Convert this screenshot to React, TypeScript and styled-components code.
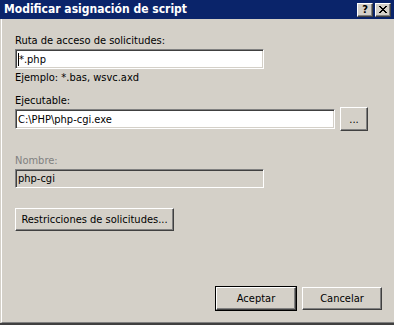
import React from "react";
import styled, { createGlobalStyle, css } from "styled-components";

const Global = createGlobalStyle`
  html, body { margin: 0; padding: 0; background: #D4D0C8; }
  body { font-family: "DejaVu Sans Condensed", "DejaVu Sans", sans-serif; font-stretch: condensed; font-size: 11px; color: #000; }
`;

const Window = styled.div`
  width: 394px;
  height: 325px;
  box-sizing: border-box;
  background: #d4d0c8;
  display: flex;
  flex-direction: column;
  border-bottom: 2px solid #404040;
`;

const TitleBar = styled.div`
  height: 19px;
  flex: none;
  background: #0a246a;
  display: flex;
  align-items: center;
  justify-content: space-between;
  padding: 0 3px 0 4px;
`;

const Title = styled.div`
  color: #fff;
  font-weight: bold;
  font-size: 12px;
  line-height: 19px;
  white-space: nowrap;
`;

const CaptionButtons = styled.div`
  display: flex;
  gap: 2px;
`;

const CaptionButton = styled.div`
  width: 16px;
  height: 14px;
  box-sizing: border-box;
  background: #d4d0c8;
  border: 1px solid;
  border-color: #fff #404040 #404040 #fff;
  box-shadow: inset -1px -1px #808080;
  display: flex;
  align-items: center;
  justify-content: center;
  font-weight: bold;
  font-size: 11px;
  line-height: 12px;
`;

const Body = styled.div`
  flex: 1;
  display: flex;
  flex-direction: column;
  margin-left: 1px;
  border-left: 1px solid #fff;
  border-bottom: 1px solid #808080;
  padding: 15px 0 0 13px;
`;

const Label = styled.div<{ $mt?: number; $disabled?: boolean }>`
  line-height: 13px;
  height: 13px;
  margin-top: ${(p) => p.$mt ?? 0}px;
  color: ${(p) => (p.$disabled ? "#808080" : "#000")};
  white-space: nowrap;
`;

const Field = styled.div<{ $w: number; $h?: number; $mt?: number; $disabled?: boolean }>`
  width: ${(p) => p.$w}px;
  height: ${(p) => p.$h ?? 20}px;
  margin-top: ${(p) => p.$mt ?? 0}px;
  box-sizing: border-box;
  background: ${(p) => (p.$disabled ? "#d4d0c8" : "#fff")};
  border: 1px solid;
  border-color: #808080 #fff #fff #808080;
  box-shadow: inset 1px 1px #404040, inset -1px -1px #d4d0c8;
  display: flex;
  align-items: center;
  padding-left: 2px;
  white-space: nowrap;
  line-height: 13px;
`;

const Caret = styled.span`
  display: inline-block;
  width: 1px;
  height: 13px;
  background: #000;
  margin-right: 0px;
`;

const Row = styled.div<{ $mt?: number }>`
  display: flex;
  align-items: center;
  gap: 5px;
  margin-top: ${(p) => p.$mt ?? 0}px;
`;

const raised = css`
  box-sizing: border-box;
  background: #d4d0c8;
  border: 1px solid;
  border-color: #fff #404040 #404040 #fff;
  box-shadow: inset -1px -1px #808080, inset 1px 1px #d4d0c8;
`;

const Button = styled.div<{ $w: number; $h?: number; $mt?: number; $default?: boolean }>`
  ${raised};
  width: ${(p) => p.$w}px;
  height: ${(p) => p.$h ?? 23}px;
  margin-top: ${(p) => p.$mt ?? 0}px;
  display: flex;
  align-items: center;
  justify-content: center;
  white-space: nowrap;
  line-height: 13px;
  ${(p) =>
    p.$default &&
    css`
      outline: 1px solid #000;
      outline-offset: 0;
      border-color: #fff #404040 #404040 #fff;
    `}
`;

const Spacer = styled.div`
  flex: 1;
`;

const Footer = styled.div`
  display: flex;
  justify-content: flex-end;
  gap: 6px;
  padding: 0 12px 12px 0;
`;

function CloseGlyph() {
  return (
    <svg width="8" height="7" viewBox="0 0 8 7" shapeRendering="crispEdges">
      <path d="M0 0h2v1h-2zM6 0h2v1h-2zM1 1h2v1h-2zM5 1h2v1h-2zM2 2h4v1h-4zM3 3h2v1h-2zM2 4h4v1h-4zM1 5h2v1h-2zM5 5h2v1h-2zM0 6h2v1h-2zM6 6h2v1h-2z" fill="#000" />
    </svg>
  );
}

export default function App() {
  return (
    <>
      <Global />
      <Window>
        <TitleBar>
          <Title>Modificar asignación de script</Title>
          <CaptionButtons>
            <CaptionButton>?</CaptionButton>
            <CaptionButton>
              <CloseGlyph />
            </CaptionButton>
          </CaptionButtons>
        </TitleBar>
        <Body>
          <Label>Ruta de acceso de solicitudes:</Label>
          <Field $w={249} $mt={2}>
            <Caret />
            *.php
          </Field>
          <Label $mt={2}>Ejemplo: *.bas, wsvc.axd</Label>
          <Label $mt={10}>Ejecutable:</Label>
          <Row>
            <Field $w={320}>C:\PHP\php-cgi.exe</Field>
            <Button $w={28} $h={24}>...</Button>
          </Row>
          <Label $mt={23} $disabled>
            Nombre:
          </Label>
          <Field $w={249} $h={19} $mt={2} $disabled>
            php-cgi
          </Field>
          <Button $w={159} $mt={20}>Restricciones de solicitudes...</Button>
          <Spacer />
          <Footer>
            <Button $w={80} $default>Aceptar</Button>
            <Button $w={80}>Cancelar</Button>
          </Footer>
        </Body>
      </Window>
    </>
  );
}
